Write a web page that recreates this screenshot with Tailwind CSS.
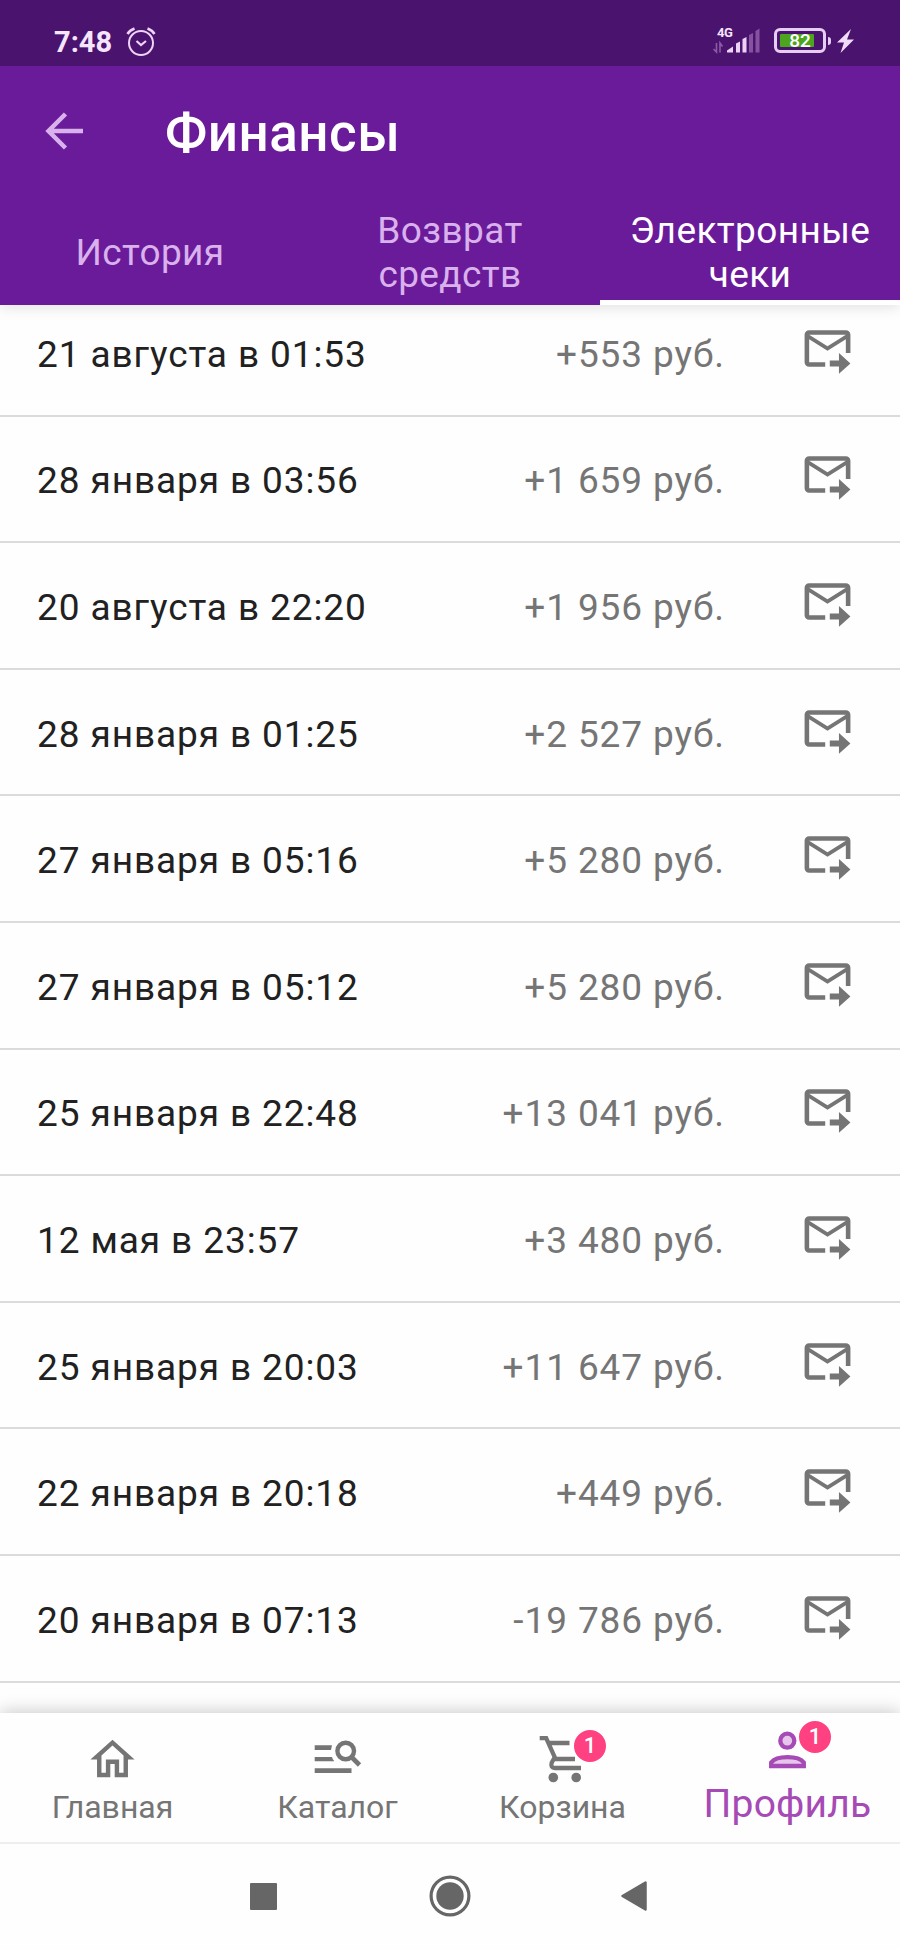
<!DOCTYPE html>
<html lang="ru">
<head>
<meta charset="utf-8">
<title>Финансы</title>
<script src="https://cdn.jsdelivr.net/npm/@tailwindcss/browser@4"></script>
</head>
<body class="w-[900px] h-[1950px] overflow-hidden bg-[#fefefe] font-[Roboto,sans-serif] flex flex-col">
<svg class="hidden"><symbol id="mail" viewBox="0 0 24 24"><path d="M13 17.2H17V14L22 18.5L17 23V19.8H13V17.2M20 4H4A2 2 0 0 0 2 6V18A2 2 0 0 0 4 20H11V18H4V8L12 13L20 8V14H22V6A2 2 0 0 0 20 4M12 11L4 6H20L12 11Z"/></symbol></svg>

<header class="relative z-10 h-[305px] shrink-0 bg-[#6a1b99] text-white flex flex-col shadow-[0_2px_14px_rgba(0,0,0,0.12)]">
  <div class="h-[66px] shrink-0 bg-[#4a136e] flex items-start">
    <div class="ml-[54px] mt-[25px] w-[60px] text-[29px] leading-[34px] font-bold text-[#f6e6fc]">7:48</div>
    <svg class="ml-[10px] mt-[26px]" width="34" height="32" viewBox="0 0 34 32" fill="none" stroke="#eed4f7" stroke-width="2"><circle cx="17" cy="17" r="12"/><path d="M12.5 15l4.5 4 5-4" stroke-width="2.2"/><path d="M3.5 8q2-3.5 7-5.500M30.500 8q-2-3.500-7-5.500" stroke-width="2.600"/></svg>
    <svg class="ml-auto mr-[12px] mt-[24px]" width="50" height="32" viewBox="0 0 50 32"><text x="5" y="13" font-size="13" font-weight="700" fill="#f6e6fc" letter-spacing="-0.500">4G</text><g stroke="#8c5ca8" stroke-width="1.600" fill="none"><path d="M4.500 19v9L1.500 25M8 28.500V19l2.500 3.500"/></g><path d="M15 28.500v-2l6-4v6zM24 28.500v-9l4-2v11zM30.500 28.500V15l4-2v15.500z" fill="#ecd3f5"/><path d="M37 28.500V11l4-2v19.500zM43.500 28.500V7l4-2.500v24z" fill="#8552a0"/></svg>
    <div class="relative mt-[28px] w-[52px] h-[25px] rounded-[6px] border-[3px] border-[#e6cdf2] p-[3px]">
      <div class="w-[34px] h-[13px] bg-[#4da51f] rounded-[1px]"></div>
      <div class="absolute inset-0 text-center leading-[20px] text-[19px] font-medium">82</div>
    </div>
    <div class="ml-[2px] mt-[37px] w-[3px] h-[8px] rounded-r bg-[#e6cdf2]"></div>
    <svg class="ml-[6px] mr-[46px] mt-[29px]" width="17" height="24" viewBox="0 0 17 24"><path d="M14 0L0 13.500h7L3.500 24 17 10.500h-7z" fill="#f0dcf8"/></svg>
  </div>
  <div class="h-[134px] shrink-0 flex items-center">
    <svg class="ml-[45px] -mt-[4px]" width="39" height="38" viewBox="0 0 39 38" fill="none" stroke="#d9b1ec" stroke-width="4.500"><path d="M38 19H4M20.500 2L3.500 19l17 17"/></svg>
    <h1 class="ml-[81px] text-[53px] leading-[60px] font-medium tracking-[0.500px]">Финансы</h1>
  </div>
  <nav class="h-[105px] shrink-0 grid grid-cols-3 text-[37px] leading-[44px] tracking-[0.400px] text-center text-[#d9b1ec]">
    <div class="flex items-center justify-center">История</div>
    <div class="flex items-center justify-center">Возврат<br>средств</div>
    <div class="flex items-center justify-center text-white border-b-[5px] border-white pt-[5px]">Электронные<br>чеки</div>
  </nav>
</header>

<main id="list" class="-mt-[15px] h-[1423px] shrink-0 overflow-hidden"></main>

<footer class="relative h-[131px] shrink-0 bg-[#fefefe] border-b-2 border-[#eeeeee] grid grid-cols-4 text-[#757575] shadow-[0_-2px_16px_rgba(0,0,0,0.2)]">
  <div class="flex flex-col items-center pt-[20px]">
    <svg width="53" height="53" viewBox="0 0 24 24" fill="currentColor"><path d="M12 5.690L17 10.190V18H15V12H9V18H7V10.190L12 5.690M12 3L2 12H5V20H11V14H13V20H19V12H22"/></svg>
    <span class="mt-[1px] text-[32px] leading-[40px]">Главная</span>
  </div>
  <div class="flex flex-col items-center pt-[20px]">
    <svg width="53" height="53" viewBox="311 1733 53 53" fill="currentColor"><path d="M314.700 1745.300H332l-1 4.700h-16.300zM314.700 1757H332q.5 2.500 2.300 4.300h-19.600zM314.700 1768.300h36.800v4.700h-36.800z"/><circle cx="345.700" cy="1751" r="8.300" fill="none" stroke="currentColor" stroke-width="4.400"/><path d="M351.500 1757l8 8" stroke="currentColor" stroke-width="4.600"/></svg>
    <span class="mt-[1px] text-[32px] leading-[40px]">Каталог</span>
  </div>
  <div class="relative flex flex-col items-center pt-[20px]">
    <svg width="53" height="53" viewBox="536 1733 53 53"><path d="M539.700 1738.200h6.500l8.500 19-3 5.500q-1.500 5.300 3.300 5.300h26M548 1743h21.500M554 1759h21" fill="none" stroke="currentColor" stroke-width="4.300"/><circle cx="553.300" cy="1777.500" r="4.800" fill="currentColor"/><circle cx="576.200" cy="1777.500" r="4.800" fill="currentColor"/></svg>
    <span class="mt-[1px] text-[32px] leading-[40px]">Корзина</span>
    <span class="absolute left-[122px] top-[15px] size-[36px] rounded-full border-2 border-[#fefefe] bg-[#ff4081] text-white text-[22px] leading-[31px] font-medium text-center">1</span>
  </div>
  <div class="relative flex flex-col items-center pt-[11px] text-[#a64ab5]">
    <svg width="53" height="53" viewBox="761 1724 53 53" fill="#e6c6ea" stroke="currentColor" stroke-width="4.300"><circle cx="787.300" cy="1740.700" r="7"/><path d="M771.200 1766v-3.500q4-5.300 16.300-5.300t16.300 5.300v3.500z"/></svg>
    <span class="mt-[4px] text-[39px] leading-[46px] tracking-[0.200px]">Профиль</span>
    <span class="absolute left-[122px] top-[6px] size-[36px] rounded-full border-2 border-[#fefefe] bg-[#ff4081] text-white text-[22px] leading-[31px] font-medium text-center">1</span>
  </div>
</footer>

<div class="relative h-[106px] shrink-0 flex items-center bg-[#fefefe] pb-[2px] text-[#666666]">
  <div class="ml-[250px] size-[27px] rounded-[1px] bg-[#666666]"></div>
  <svg class="ml-[152px]" width="42" height="42" viewBox="0 0 42 42"><circle cx="21" cy="21" r="18.900" fill="none" stroke="currentColor" stroke-width="3.200"/><circle cx="21" cy="21" r="13.700" fill="currentColor"/></svg>
  <svg class="ml-[150px]" width="26" height="30" viewBox="0 0 26 30"><path d="M1.500 15L24.500 1.500v27z" fill="currentColor" stroke="currentColor" stroke-width="2.500" stroke-linejoin="round"/></svg>
</div>

<script>
const receipts = [
  ['21 августа в 01:53', '+553 руб.'],
  ['28 января в 03:56', '+1 659 руб.'],
  ['20 августа в 22:20', '+1 956 руб.'],
  ['28 января в 01:25', '+2 527 руб.'],
  ['27 января в 05:16', '+5 280 руб.'],
  ['27 января в 05:12', '+5 280 руб.'],
  ['25 января в 22:48', '+13 041 руб.'],
  ['12 мая в 23:57', '+3 480 руб.'],
  ['25 января в 20:03', '+11 647 руб.'],
  ['22 января в 20:18', '+449 руб.'],
  ['20 января в 07:13', '-19 786 руб.'],
];
document.getElementById('list').innerHTML = receipts.map(([date, sum]) => `
  <div class="h-[126.6px] border-b-2 border-[#dbdbdb] flex items-center pl-[37px] pr-[45px] text-[37px] leading-[44px] tracking-[0.900px]">
    <span class="pt-[5px] text-[#212121]">${date}</span>
    <span class="ml-auto pt-[5px] text-[#757575]">${sum}</span>
    <svg class="ml-[75px] -mt-[8px] size-[55px] text-[#757575]" fill="currentColor"><use href="#mail"/></svg>
  </div>`).join('');
</script>
</body>
</html>
